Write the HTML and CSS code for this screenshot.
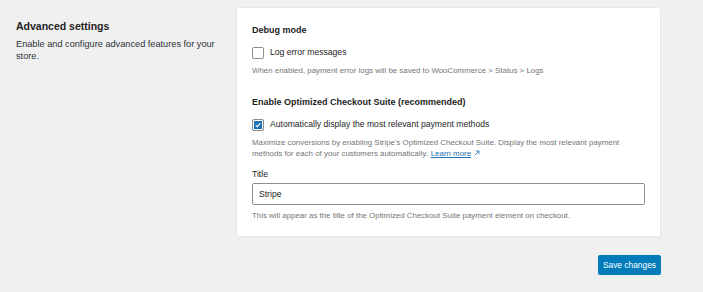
FILE: index.html
```html
<!DOCTYPE html>
<html>

<head>
    <meta charset="UTF-8" />
    <title>Advanced settings</title>
    <link rel="stylesheet" href="styles.css">
</head>

<body>
    <div class="page">
        <div class="intro">
            <h2>Advanced settings</h2>
            <p>Enable and configure advanced features for your store.</p>
        </div>
        <div class="main">
            <div class="card">
                <div class="section">
                    <h3>Debug mode</h3>
                    <label class="check">
                        <span class="box"></span>
                        Log error messages
                    </label>
                    <p class="help">When enabled, payment error logs will be saved to WooCommerce &gt; Status &gt; Logs</p>
                </div>
                <div class="section">
                    <h3>Enable Optimized Checkout Suite (recommended)</h3>
                    <label class="check">
                        <span class="box checked">
                            <svg width="8" height="8" viewBox="0 0 8 8"><path d="M1.8 4.4 L3.3 5.7 L6.2 2.3" fill="none" stroke="#fff" stroke-width="1.1"/></svg>
                        </span>
                        Automatically display the most relevant payment methods
                    </label>
                    <p class="help"><span class="line">Maximize conversions by enabling Stripe's Optimized Checkout Suite. Display the most relevant payment</span><span class="line">methods for each of your customers automatically.<a href="#">Learn more</a><svg class="ext" width="6" height="6" viewBox="0 0 6 6"><path d="M0.8 5.2 L5 1 M1.8 1 H5 V4.2" fill="none" stroke="#2271b1" stroke-width="0.8"/></svg></span></p>
                    <div class="field">
                        <label for="title">Title</label>
                        <input id="title" type="text" value="Stripe">
                    </div>
                    <p class="help note">This will appear as the title of the Optimized Checkout Suite payment element on checkout.</p>
                </div>
            </div>
            <div class="actions">
                <button class="btn">Save changes</button>
            </div>
        </div>
    </div>
</body>

</html>
```

FILE: styles.css
```css
* {
    box-sizing: border-box;
}

body {
    background: #f0f0f0;
    font-family: "Liberation Sans", Arial, sans-serif;
    color: #1e1e1e;
    margin: 0;
}

.page {
    display: flex;
    padding: 7px 0 0 16px;
    gap: 16px;
}

.intro {
    width: 204px;
    padding-top: 12px;
}

.intro h2 {
    font-size: 10.5px;
    font-weight: bold;
    margin: 0 0 5px;
    line-height: 14px;
}

.intro p {
    font-size: 9.2px;
    line-height: 12px;
    margin: 0;
    color: #2c3338;
}

.main {
    width: 425px;
}

.card {
    background: #fff;
    border: 1px solid #e6e6e6;
    border-radius: 2px;
    padding: 16px 15px 15px;
}

.section + .section {
    margin-top: 20px;
}

.section h3 {
    font-size: 9px;
    font-weight: bold;
    line-height: 12px;
    margin: 0 0 10px;
}

.check {
    display: flex;
    align-items: center;
    gap: 6px;
    font-size: 8.6px;
    line-height: 13px;
}

.box {
    width: 12px;
    height: 12px;
    border: 1px solid #8c8f94;
    border-radius: 2px;
    background: #fff;
    display: flex;
    align-items: center;
    justify-content: center;
}

.box.checked {
    background: #2271b1;
    border-color: #8c8f94;
    box-shadow: inset 0 0 0 1px #fff;
}

.help {
    font-size: 7.9px;
    line-height: 11px;
    color: #757575;
    margin: 6px 0 0;
}

.help .line {
    display: block;
}

.help a {
    color: #2271b1;
    margin-left: 3px;
}

.ext {
    margin-left: 3px;
    vertical-align: 0;
}

.field {
    margin-top: 9px;
}

.field label {
    display: block;
    font-size: 8.6px;
    line-height: 12px;
    margin-bottom: 3px;
}

.field input {
    display: block;
    width: 100%;
    height: 22px;
    border: 1px solid #8c8f94;
    border-radius: 2px;
    padding: 0 6px;
    font-family: inherit;
    font-size: 8.6px;
    color: #1e1e1e;
}

.help.note {
    margin-top: 5px;
}

.actions {
    display: flex;
    justify-content: flex-end;
    margin-top: 18px;
}

.btn {
    height: 20px;
    padding: 0 5px;
    background: #007cba;
    color: #fff;
    border: none;
    border-radius: 2px;
    font-family: inherit;
    font-size: 8.4px;
}
```
